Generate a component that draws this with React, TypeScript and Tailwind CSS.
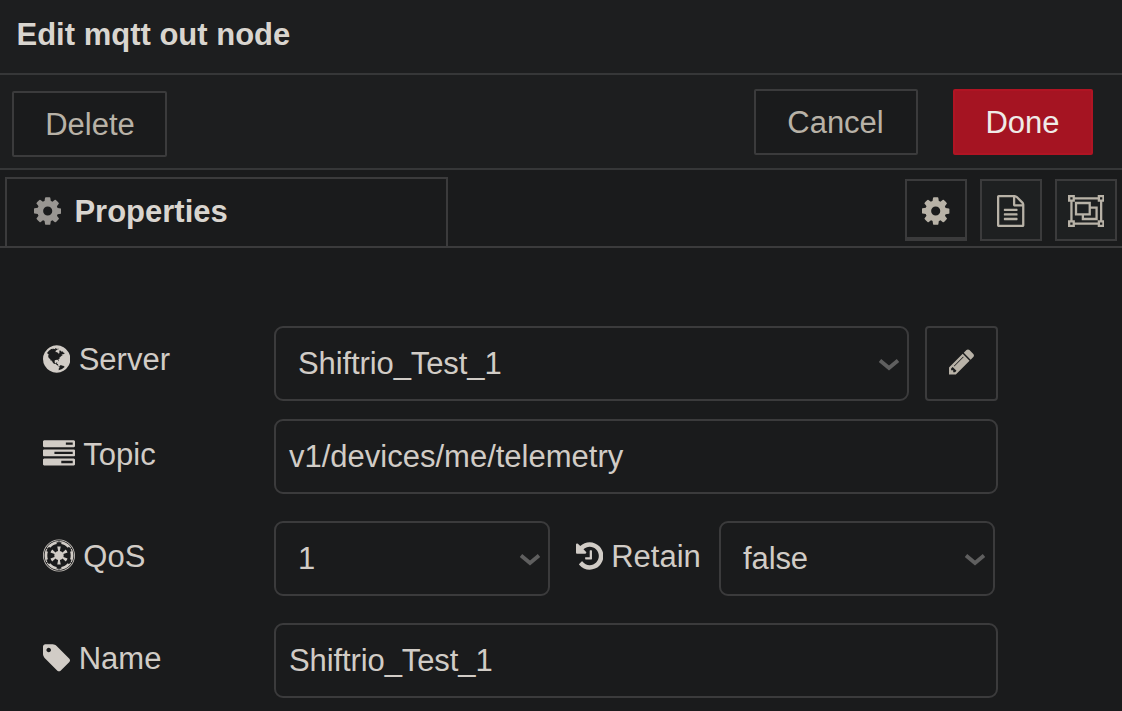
import type { ReactNode } from "react";
import { FaEmpire } from "react-icons/fa";

type IconProps = { className?: string };

function Glyph({ box, d, className }: { box: string; d: string; className?: string }) {
  return (
    <svg viewBox={box} fill="currentColor" className={"shrink-0 " + (className ?? "")} aria-hidden="true">
      <path d={d} />
    </svg>
  );
}

const COG =
  "M1152 896q0-106-75-181t-181-75-181 75-75 181 75 181 181 75 181-75 75-181zm512-109v222q0 12-8 23t-20 13l-185 28q-19 54-39 91 35 50 107 138 10 12 10 25t-9 23q-27 37-99 108t-94 71q-12 0-26-9l-138-108q-44 23-91 38-16 136-29 186-7 28-36 28h-222q-14 0-24.5-8.5t-11.5-21.5l-28-184q-49-16-90-37l-141 107q-10 9-25 9-14 0-25-11-126-114-165-168-7-10-7-23 0-12 8-23 15-21 51-66.5t54-70.5q-27-50-41-99l-183-27q-13-2-21-12.5t-8-23.5v-222q0-12 8-23t19-13l186-28q14-46 39-92-40-57-107-138-10-12-10-24 0-10 9-23 26-36 98.5-107.5t94.5-71.5q13 0 26 10l138 107q44-23 91-38 16-136 29-186 7-28 36-28h222q14 0 24.5 8.5t11.5 21.5l28 184q49 16 90 37l142-107q9-9 24-9 13 0 25 10 129 119 165 170 7 8 7 22 0 12-8 23-15 21-51 66.5t-54 70.5q26 50 41 98l183 28q13 2 21 12.5t8 23.5z";
const FILE_TEXT =
  "M1596 380q28 28 48 76t20 88v1152q0 40-28 68t-68 28h-1344q-40 0-68-28t-28-68v-1600q0-40 28-68t68-28h896q40 0 88 20t76 48zm-444-244v376h376q-10-29-22-41l-313-313q-12-12-41-22zm384 1528v-1024h-416q-40 0-68-28t-28-68v-416h-768v1536h1280zm-1024-864q0-14 9-23t23-9h704q14 0 23 9t9 23v64q0 14-9 23t-23 9h-704q-14 0-23-9t-9-23v-64zm736 224q14 0 23 9t9 23v64q0 14-9 23t-23 9h-704q-14 0-23-9t-9-23v-64q0-14 9-23t23-9h704zm0 256q14 0 23 9t9 23v64q0 14-9 23t-23 9h-704q-14 0-23-9t-9-23v-64q0-14 9-23t23-9h704z";
const OBJECT_GROUP =
  "M2048 384h-128v1024h128v384h-384v-128h-1280v128h-384v-384h128v-1024h-128v-384h384v128h1280v-128h384v384zM1792 128v128h128v-128h-128zM128 128v128h128v-128h-128zM256 1664v-128h-128v128h128zM1664 1536v-128h128v-1024h-128v-128h-1280v128h-128v1024h128v128h1280zM1920 1664v-128h-128v128h128zM1280 640h384v768h-896v-256h-384v-768h896v256zM512 1024h640v-512h-640v512zM1536 1280v-512h-256v384h-384v128h640z";
const PENCIL =
  "M491 1536l91-91-235-235-91 91v107h128v128h107zm523-928q0-22-22-22-10 0-17 7l-542 542q-7 7-7 17 0 22 22 22 10 0 17-7l542-542q7-7 7-17zm-54-192l416 416-832 832h-416v-416zm683 96q0 53-37 90l-166 166-416-416 166-165q36-38 90-38 53 0 91 38l235 234q37 39 37 91z";
const TASKS =
  "M1024 1408h640v-128h-640v128zm-384-512h1024v-128h-1024v128zm640-512h384v-128h-384v128zm512 832v256q0 26-19 45t-45 19h-1664q-26 0-45-19t-19-45v-256q0-26 19-45t45-19h1664q26 0 45 19t19 45zm0-512v256q0 26-19 45t-45 19h-1664q-26 0-45-19t-19-45v-256q0-26 19-45t45-19h1664q26 0 45 19t19 45zm0-512v256q0 26-19 45t-45 19h-1664q-26 0-45-19t-19-45v-256q0-26 19-45t45-19h1664q26 0 45 19t19 45z";
const HISTORY =
  "M1664 896q0 156-61 298t-164 245-245 164-298 61q-172 0-327-72.5t-264-204.5q-7-10-6.5-22.5t8.5-20.5l137-138q10-9 25-9 16 2 23 12 73 95 179 147t225 52q104 0 198.5-40.5t163.5-109.5 109.5-163.5 40.5-198.5-40.5-198.5-109.5-163.5-163.5-109.5-198.5-40.5q-98 0-188 35.5t-160 101.5l137 138q31 30 14 69-17 40-59 40h-448q-26 0-45-19t-19-45v-448q0-42 40-59 39-17 69 14l130 129q107-101 244.5-156.5t284.5-55.5q156 0 298 61t245 164 164 245 61 298zm-640-288v448q0 14-9 23t-23 9h-320q-14 0-23-9t-9-23v-64q0-14 9-23t23-9h224v-352q0-14 9-23t23-9h64q14 0 23 9t9 23z";
const TAG =
  "M576 448q0-53-37.5-90.5t-90.5-37.5-90.5 37.5-37.5 90.5 37.5 90.5 90.5 37.5 90.5-37.5 37.5-90.5zm1067 576q0 53-37 90l-491 492q-39 37-91 37-53 0-90-37l-715-716q-38-37-64.5-101t-26.5-117v-416q0-52 38-90t90-38h416q53 0 117 26.5t102 64.5l715 714q37 39 37 91z";
const GLOBE =
  "M896 128q209 0 385.5 103t279.5 279.5 103 385.5-103 385.5-279.5 279.5-385.5 103-385.5-103-279.5-279.5-103-385.5 103-385.5 279.5-279.5 385.5-103zm274 521q-2 1-9.5 9.5t-13.5 9.5q2 0 4.5-5t5-11 3.5-7q6-7 22-15 14-6 52-12 34-8 51 11-2-2 9.5-13t14.5-12q3-2 15-4.5t15-7.5l2-22q-12 1-17.5-7t-6.5-21q0 2-6 8 0-7-4.5-8t-11.5 1-9 1q-10-3-15-7.5t-8-16.5-4-15q-2-5-9.5-11t-9.5-10q-1-2-2.5-5.5t-3-6.5-4-5.5-5.5-2.5-7 5-7.5 10-4.5 5q-3-2-6-1.5t-4.5 1-4.5 3-5 3.5q-3 2-8.5 3t-8.5 2q15-5-1-11-10-4-16-3 9-4 7.5-12t-8.5-14h5q-1-4-8.5-8.5t-17.5-8.5-13-6q-8-5-34-9.5t-33-.5q-5 6-4.5 10.5t4 14 3.5 12.5q1 6-5.5 13t-6.5 12q0 7 14 15.5t10 21.5q-3 8-16 16t-16 12q-5 8-1.5 18.5t10.5 16.5q2 2 1.5 4t-3.5 4.5-5.5 4-6.5 3.5l-3 2q-11 5-20.5-6t-13.5-26q-7-25-16-30-23-8-29 1-5-13-41-26-25-9-58-4 6-1 0-15-7-15-19-12 3-6 4-17.5t1-13.5q3-13 12-23 1-1 7-8.5t9.5-13.5.5-6q35 4 50-11 5-5 11.5-17t10.5-17q9-6 14-5.5t14.5 5.5 14.5 5q14 1 15.5-11t-7.5-20q12 1 3-17-4-7-8-9-12-4-27 5-8 4 2 8-1-1-9.5 10.5t-16.5 17.5-16-5q-1-1-5.5-13.5t-9.5-13.5q-8 0-16 15 3-8-11-15t-24-8q19-12-8-27-7-4-20.5-5t-19.5 4q-5 7-5.5 11.5t5 8 10.5 5.5 11.5 4 8.5 3q14 10 8 14-2 1-8.5 3.5t-11.5 4.5-6 4q-3 4 0 14t-2 14q-5-5-9-17.5t-7-16.5q7 9-25 6l-10-1q-4 0-16 2t-20.5 1-13.5-8q-4-8 0-20 1-4 4-2-4-3-11-9.5t-10-8.5q-46 15-94 41 6 1 12-1 5-2 13-6.5t10-5.5q34-14 42-7l5-5q14 16 20 25-7-4-30-1-20 6-22 12 7 12 5 18-4-3-11.5-10t-14.5-11-15-5q-16 0-22 1-146 80-235 222 7 7 12 8 4 1 5 9t2.5 11 11.5-3q9 8 3 19 1-1 44 27 19 17 21 21 3 11-10 18-1-2-9-9t-9-4q-3 5 .5 18.5t10.5 12.5q-7 0-9.5 16t-2.5 35.5-1 23.5l2 1q-3 12 5.5 34.5t21.5 19.5q-13 3 20 43 6 8 8 9 3 2 12 7.5t15 10 10 10.5q4 5 10 22.5t14 23.5q-2 6 9.5 20t10.5 23q-1 0-2.5 1t-2.5 1q3 7 15.5 14t15.5 13q1 3 2 10t3 11 8 2q2-20-24-62-15-25-17-29-3-5-5.5-15.5t-4.5-14.5q2 0 6 1.5t8.5 3.5 7.5 4 2 3q-3 7 2 17.5t12 18.5 17 19 12 13q6 6 14 19.5t0 13.5q9 0 20 10.5t17 19.5q5 8 8 26t5 24q2 7 8.5 13.5t12.5 9.5l16 8 13 7q5 2 18.5 10.5t21.5 11.5q10 4 16 4t14.5-2.5 13.5-3.5q15-2 29 15t21 21q36 19 55 11-2 1 .5 7.5t8 15.5 9 14.5 5.5 8.5q5 6 18 15t18 15q6-4 7-9-3 8 7 20t18 10q14-3 14-32-31 15-49-18 0-1-2.5-5.5t-4-8.5-2.5-8.5 0-7.5 5-3q9 0 10-3.5t-2-12.5-4-13q-1-8-11-20t-12-15q-5 9-16 8t-16-9q0 1-1.5 5.5t-1.5 6.5q-13 0-15-1 1-3 2.5-17.5t3.5-22.5q1-4 5.5-12t7.5-14.5 4-12.5-4.5-9.5-17.5-2.5q-19 1-26 20-1 3-3 10.5t-5 11.5-9 7q-7 3-24 2t-24-5q-13-8-22.5-29t-9.5-37q0-10 2.5-26.5t3-25-5.5-24.5q3-2 9-9.5t10-10.5q2-1 4.5-1.5t4.5 0 4-1.5 3-6q-1-1-4-3-3-3-4-3 7 3 28.5-1.5t27.5 1.5q15 11 22-2 0-1-2.5-9.5t-.5-13.5q5 27 29 9 3 3 15.5 5t17.5 5q3 2 7 5.5t5.5 4.5 5-.5 8.5-6.5q10 14 12 24 11 40 19 44 7 3 11 2t4.5-9.5 0-14-1.5-12.5l-1-8v-18l-1-8q-15-3-18.5-12t1.5-18.5 15-18.5q1-1 8-3.5t15.5-6.5 12.5-8q21-19 15-35 7 0 11-9-1 0-5-3t-7.5-5-4.5-2q9-5 2-16 5-3 7.5-11t7.5-10q9 12 21 2 7-8 1-16 5-7 20.5-10.5t18.5-9.5q7 2 8-2t1-12 3-12q4-5 15-9t13-5l17-11q3-4 0-4 18 2 31-11 10-11-6-20 3-6-3-9.5t-15-5.5q3-1 11.5-.5t10.5-1.5q15-10-7-16-17-5-43 12zm-163 877q206-36 351-189-3-3-12.5-4.5t-12.5-3.5q-18-7-24-8 1-7-2.5-13t-8-9-12.5-8-11-7q-2-2-7-6t-7-5.5-7.5-4.5-8.5-2-10 1l-3 1q-3 1-5.5 2.5t-5.5 3-4 3 0 2.5q-21-17-36-22-5-1-11-5.5t-10.5-7-10-1.5-11.5 7q-5 5-6 15t-2 13q-7-5 0-17.5t2-18.5q-3-6-10.5-4.5t-12 4.5-11.5 8.5-9 6.5-8.5 5.5-8.5 7.5q-3 4-6 12t-5 11q-2-4-11.5-6.5t-9.5-5.5q2 10 4 35t5 38q7 31-12 48-27 25-29 40-4 22 12 26 0 7-8 20.5t-7 21.5q0 6 2 16z";

function Chevron({ className }: IconProps) {
  return (
    <svg
      viewBox="0 0 22 14"
      fill="none"
      stroke="currentColor"
      strokeWidth="3.8"
      className={"h-[14px] w-[22px] shrink-0 text-[#5f5f5f] " + (className ?? "")}
      aria-hidden="true"
    >
      <path d="M2 2.5l9 7.5L20 2.5" />
    </svg>
  );
}

function Label({ icon, children, className }: { icon: ReactNode; children: ReactNode; className?: string }) {
  return (
    <div className={"flex items-center gap-[8.3px] " + (className ?? "")}>
      <span className="flex shrink-0 pb-[2px]">{icon}</span>
      <span>{children}</span>
    </div>
  );
}

function Select({ value, className }: { value: string; className?: string }) {
  return (
    <div
      className={
        "flex h-[75px] items-center justify-between rounded-[9px] border-2 border-[#3b3b3c] pr-[7px] pl-[22px] tracking-[-0.1px] " +
        (className ?? "")
      }
    >
      <span>{value}</span>
      <Chevron className="mt-[2px]" />
    </div>
  );
}

function TextInput({ value, className }: { value: string; className?: string }) {
  return (
    <div
      className={
        "flex h-[75px] w-[724px] items-center rounded-[9px] border-2 border-[#3b3b3c] pl-[13px] " + (className ?? "")
      }
    >
      {value}
    </div>
  );
}

export default function App() {
  return (
    <div className="flex h-[711px] w-[1122px] flex-col overflow-hidden bg-[#1a1b1c] font-['Liberation_Sans',Arial,sans-serif] text-[31px] leading-[36px] text-[#d1ccc6]">
      <header className="h-[75px] shrink-0 border-b-2 border-[#363738] bg-[#1d1e1f] pt-[17px] pl-[16.5px] font-bold text-[#d9d5cf]">
        Edit mqtt out node
      </header>

      <div className="flex h-[95px] shrink-0 items-start justify-between border-b-2 border-[#363738] bg-[#1d1e1f] pt-[14px] pr-[29px] pl-[12px] text-[#b8b2a7]">
        <button className="mt-[2px] h-[66px] w-[155px] rounded-[2px] border-2 border-[#3b3b3c] bg-[#1a1b1c] pt-[2px] pl-[1px]">
          Delete
        </button>
        <div className="flex gap-[35px]">
          <button className="h-[66px] w-[164px] rounded-[2px] border-2 border-[#3b3b3c] bg-[#1a1b1c] pt-[2px] pr-[1px]">
            Cancel
          </button>
          <button className="h-[66px] w-[140px] rounded-[2px] border-2 border-[#b01423] bg-[#a51422] pt-[2px] pr-[1px] text-[#efebe8]">
            Done
          </button>
        </div>
      </div>

      <div className="flex h-[78px] shrink-0 items-start justify-between border-b-2 border-[#3b3b3c] pt-[7px] pr-[5px] pl-[5px]">
        <div className="flex h-[69px] w-[443px] items-center border-2 border-b-0 border-[#3b3b3c] pb-[2px] pl-[27px] font-bold text-[#d9d5cf]">
          <Glyph box="128 0 1536 1792" d={COG} className="mb-[2px] h-[32px] w-[27.4px] text-[#999692]" />
          <span className="ml-[13px]">Properties</span>
        </div>
        <div className="mt-[2px] flex gap-[13px] text-[#b8b2a7]">
          <div className="flex h-[62px] w-[62px] items-center justify-center border-2 border-b-4 border-[#3b3b3c] pt-[4px]">
            <Glyph box="128 0 1536 1792" d={COG} className="h-[32px] w-[27.4px]" />
          </div>
          <div className="flex h-[62px] w-[62px] items-center justify-center border-2 border-[#3b3b3c] bg-[#1e2021] pt-[2px]">
            <Glyph box="128 0 1536 1792" d={FILE_TEXT} className="h-[32px] w-[27.4px]" />
          </div>
          <div className="flex h-[62px] w-[62px] items-center justify-center border-2 border-[#3b3b3c] bg-[#1e2021] pt-[2px]">
            <Glyph box="0 0 2048 1792" d={OBJECT_GROUP} className="h-[32px] w-[36.6px]" />
          </div>
        </div>
      </div>

      <main className="flex flex-col pt-[78px] pl-[43px]">
        <div className="flex h-[75px] items-center">
          <Label
            className="w-[231px] pb-[8px]"
            icon={<Glyph box="128 0 1536 1792" d={GLOBE} className="h-[32px] w-[27.4px]" />}
          >
            Server
          </Label>
          <Select value="Shiftrio_Test_1" className="w-[635px]" />
          <button className="ml-[16px] flex h-[75px] w-[73px] items-center justify-center rounded-[4px] border-2 border-[#3b3b3c] pb-[3px] text-[#b8b2a7]">
            <Glyph box="128 0 1536 1792" d={PENCIL} className="h-[29.5px] w-[25.3px]" />
          </button>
        </div>

        <div className="mt-[18px] flex h-[75px] items-center">
          <Label
            className="w-[231px] pb-[4px]"
            icon={<Glyph box="0 0 1792 1792" d={TASKS} className="h-[32px] w-[32px]" />}
          >
            Topic
          </Label>
          <TextInput value="v1/devices/me/telemetry" />
        </div>

        <div className="mt-[27px] flex h-[75px] items-center">
          <Label className="w-[231px] pb-[4px]" icon={<FaEmpire className="h-[33px] w-[32px] shrink-0" />}>
            QoS
          </Label>
          <Select value="1" className="w-[276px]" />
          <Label
            className="ml-[25.5px] w-[143.5px] pb-[4px]"
            icon={<Glyph box="128 0 1536 1792" d={HISTORY} className="h-[32px] w-[27.4px]" />}
          >
            Retain
          </Label>
          <Select value="false" className="w-[276px]" />
        </div>

        <div className="mt-[27px] flex h-[75px] items-center">
          <Label
            className="w-[231px] pb-[4px]"
            icon={<Glyph box="128 0 1536 1792" d={TAG} className="h-[32px] w-[27.4px]" />}
          >
            Name
          </Label>
          <TextInput value="Shiftrio_Test_1" className="tracking-[-0.1px]" />
        </div>
      </main>
    </div>
  );
}
